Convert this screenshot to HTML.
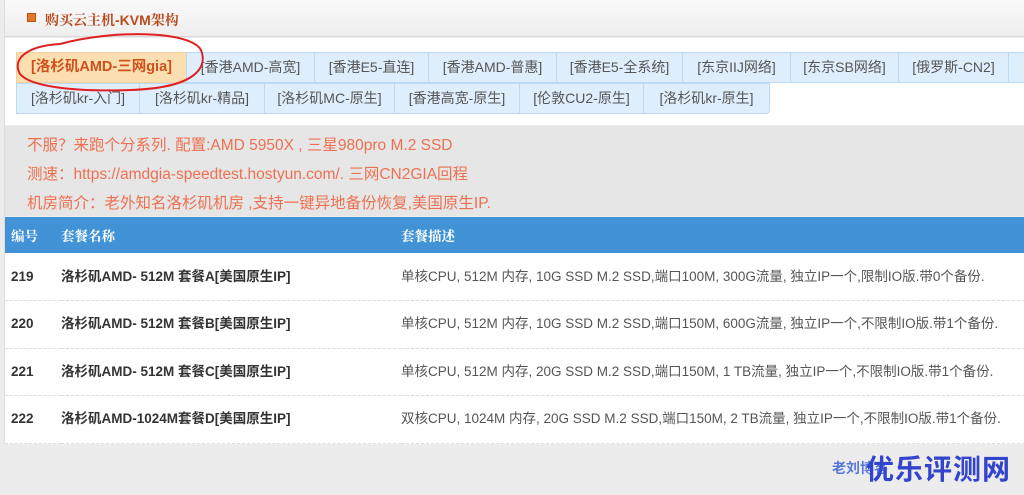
<!DOCTYPE html>
<html><head><meta charset="utf-8"><style>
*{margin:0;padding:0;box-sizing:border-box}
body{width:1024px;height:495px;background:#ececec;font-family:"Liberation Sans","Noto Sans CJK SC",sans-serif;position:relative;overflow:hidden}
.wrap{position:absolute;left:4px;top:0;width:1020px;height:443px;border-left:1px solid #ddd}
.hd{position:absolute;left:0;top:0;width:1020px;height:37px;background:linear-gradient(#fafafa,#eeeeee);border-bottom:1px solid #d8d8d8}
.hd .ic{position:absolute;left:22px;top:13px;width:9px;height:9px;background:#e0782e;border:1px solid #c05010}
.hd .t{position:absolute;left:40px;top:10px;font-size:14px;font-weight:bold;color:#b84a1e;font-family:"Liberation Sans","Noto Serif CJK SC",serif}
.tabs{position:absolute;left:0;top:38px;width:1020px;height:87px;background:#fff}
.tab{position:absolute;height:31px;background:#dfeefc;border:1px solid #bcdaf4;color:#555;font-size:14px;line-height:29px;text-align:center;white-space:nowrap}
.tab.on{background:#fbdfb0;color:#d0501c;font-weight:bold;border-color:#f0cfa0;font-size:14.5px}
.info{position:absolute;left:0;top:126px;width:1020px;height:90px;background:#e6e6e6;color:#ee7050;font-size:15.5px}
.info div{position:absolute;left:22px}
table{position:absolute;left:0;top:217px;width:1020px;border-collapse:collapse;background:#fff}
th{background:#4193d6;color:#fff;height:36px;font-size:13.5px;text-align:left;font-family:"Liberation Sans","Noto Serif CJK SC",serif}
td{height:47.5px;font-size:13.5px;border-bottom:1px dashed #ddd;vertical-align:middle;line-height:16px}
td.n{font-weight:bold;color:#333;padding-left:6px}
td.m{font-weight:bold;color:#333}
td.d{color:#555;font-size:13.5px}
th.a{padding-left:6px;width:56px}
th.b{width:340px}
</style></head><body>
<div class="wrap">
<div class="hd"><div class="ic"></div><div class="t">购买云主机-KVM架构</div></div>
<div class="tabs">
<div class="tab on" style="left:11px;top:14px;width:171px">[洛杉矶AMD-三网gia]</div>
<div class="tab" style="left:181px;top:14px;width:129px">[香港AMD-高宽]</div>
<div class="tab" style="left:309px;top:14px;width:115px">[香港E5-直连]</div>
<div class="tab" style="left:423px;top:14px;width:129px">[香港AMD-普惠]</div>
<div class="tab" style="left:551px;top:14px;width:127px">[香港E5-全系统]</div>
<div class="tab" style="left:677px;top:14px;width:109px">[东京IIJ网络]</div>
<div class="tab" style="left:785px;top:14px;width:109px">[东京SB网络]</div>
<div class="tab" style="left:893px;top:14px;width:111px">[俄罗斯-CN2]</div>
<div class="tab" style="left:1003px;top:14px;width:30px"></div>
<div class="tab" style="left:11px;top:45px;width:124px">[洛杉矶kr-入门]</div>
<div class="tab" style="left:134px;top:45px;width:126px">[洛杉矶kr-精品]</div>
<div class="tab" style="left:259px;top:45px;width:131px">[洛杉矶MC-原生]</div>
<div class="tab" style="left:389px;top:45px;width:126px">[香港高宽-原生]</div>
<div class="tab" style="left:514px;top:45px;width:125px">[伦敦CU2-原生]</div>
<div class="tab" style="left:638px;top:45px;width:127px;border-radius:0 0 4px 0">[洛杉矶kr-原生]</div>
</div>
<div class="info">
<div style="top:7px">不服？来跑个分系列. 配置:AMD 5950X , 三星980pro M.2 SSD</div>
<div style="top:36px">测速：https://amdgia-speedtest.hostyun.com/. 三网CN2GIA回程</div>
<div style="top:65px">机房简介：老外知名洛杉矶机房 ,支持一键异地备份恢复,美国原生IP.</div>
</div>
<table>
<tr><th class="a">编号</th><th class="b">套餐名称</th><th>套餐描述</th></tr>
<tr><td class="n">219</td><td class="m">洛杉矶AMD- 512M 套餐A[美国原生IP]</td><td class="d">单核CPU, 512M 内存, 10G SSD M.2 SSD,端口100M, 300G流量, 独立IP一个,限制IO版.带0个备份.</td></tr>
<tr><td class="n">220</td><td class="m">洛杉矶AMD- 512M 套餐B[美国原生IP]</td><td class="d">单核CPU, 512M 内存, 10G SSD M.2 SSD,端口150M, 600G流量, 独立IP一个,不限制IO版.带1个备份.</td></tr>
<tr><td class="n">221</td><td class="m">洛杉矶AMD- 512M 套餐C[美国原生IP]</td><td class="d">单核CPU, 512M 内存, 20G SSD M.2 SSD,端口150M, 1 TB流量, 独立IP一个,不限制IO版.带1个备份.</td></tr>
<tr><td class="n">222</td><td class="m">洛杉矶AMD-1024M套餐D[美国原生IP]</td><td class="d">双核CPU, 1024M 内存, 20G SSD M.2 SSD,端口150M, 2 TB流量, 独立IP一个,不限制IO版.带1个备份.</td></tr>
</table>
</div>
<div style="position:absolute;left:832px;top:458px;font-size:14px;font-weight:bold;color:#5577dd">老刘博客</div>
<div style="position:absolute;left:866px;top:448px;font-size:28px;font-weight:bold;color:#3344cc;letter-spacing:1px">优乐评测网</div>
<svg style="position:absolute;left:0;top:0" width="1024" height="495"><path d="M60 44 C110 30 190 30 201 50 C208 68 195 88 130 90 C70 92 30 86 20 74 C12 60 25 46 60 44" fill="none" stroke="#e02020" stroke-width="2"/></svg>
</body></html>
